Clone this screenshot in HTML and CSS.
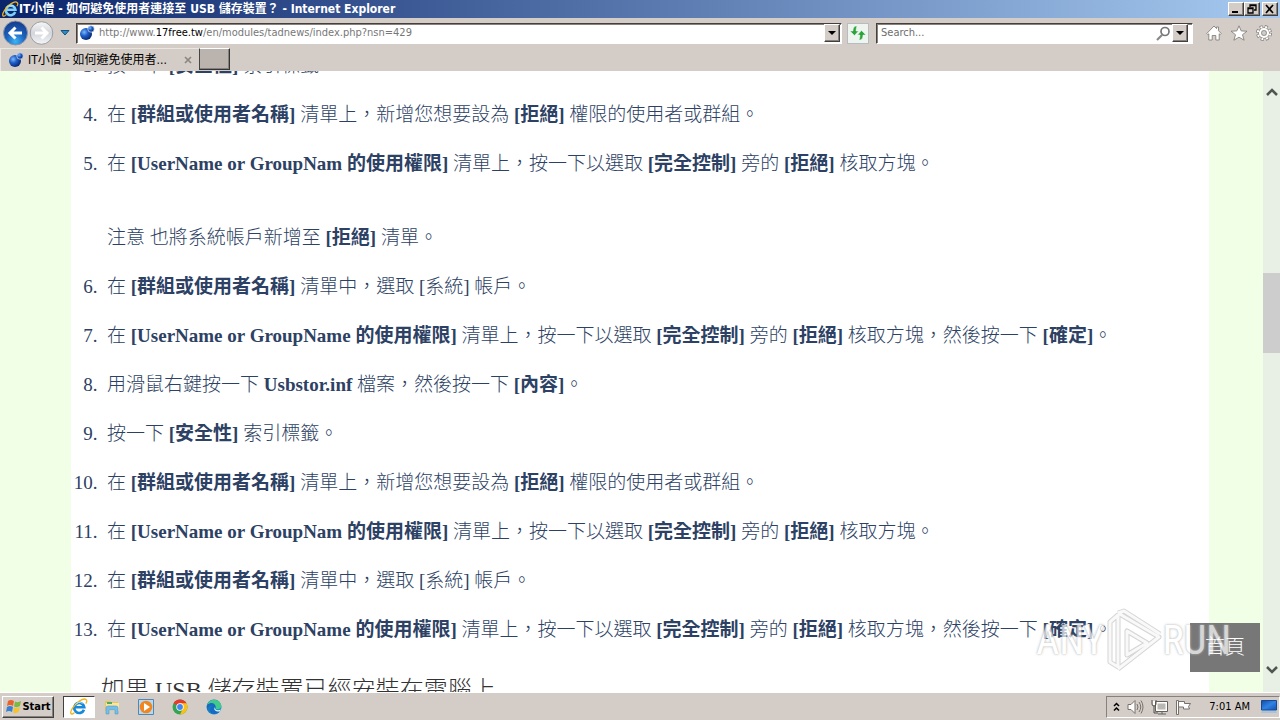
FILE: index.html
```html
<!DOCTYPE html>
<html lang="zh-Hant">
<head>
<meta charset="utf-8">
<title>IT小僧 - 如何避免使用者連接至 USB 儲存裝置？</title>
<link rel="stylesheet" href="styles.css">
</head>
<body>
<svg class="defs" width="0" height="0" aria-hidden="true">
  <defs>
    <radialGradient id="blue" cx="50%" cy="85%" r="80%"><stop offset="0" stop-color="#3fb4f4"/><stop offset=".5" stop-color="#1b62bd"/><stop offset="1" stop-color="#173f8d"/></radialGradient>
    <radialGradient id="ball" cx="35%" cy="35%" r="70%"><stop offset="0" stop-color="#7eb8f8"/><stop offset=".45" stop-color="#1e5fc8"/><stop offset="1" stop-color="#08256e"/></radialGradient>
    <linearGradient id="silver" x2="0" y2="1"><stop offset="0" stop-color="#f7f7f7"/><stop offset=".5" stop-color="#d2d5da"/><stop offset="1" stop-color="#f4f6f8"/></linearGradient>
    <linearGradient id="screen" x2="1" y2="1"><stop offset="0" stop-color="#164aa8"/><stop offset=".5" stop-color="#2f83e4"/><stop offset="1" stop-color="#1550b4"/></linearGradient>
    <linearGradient id="edge" x2="1" y2="1"><stop offset="0" stop-color="#1168b8"/><stop offset="1" stop-color="#1c9ad8"/></linearGradient>
  </defs>
  <symbol id="ie" viewBox="0 0 20 20">
    <path d="M15.500 13A5.600 5.600 0 1 1 15.800 10.300H6" fill="none" stroke="currentColor" stroke-width="3"/>
    <path d="M5 16C1 20-1 17 3 11 7 5 15-1 18 2c1 1 .5 3-.5 4" fill="none" stroke="#f1b51c" stroke-width="1.500"/>
    <path d="M6 7.500A5.600 5.600 0 0 1 14 6" fill="none" stroke="#b5e6ff" stroke-width="1"/>
  </symbol>
  <symbol id="globe" viewBox="0 0 16 16">
    <circle cx="7" cy="9" r="6" fill="url(#ball)"/><circle cx="12" cy="4" r="3.200" fill="url(#ball)" stroke="#dfeaff" stroke-width=".7"/>
  </symbol>
</svg>

<header class="titlebar">
  <svg class="title-icon" aria-hidden="true"><use href="#ie"/></svg>
  <h1 class="title">IT小僧 - 如何避免使用者連接至 USB 儲存裝置？ - Internet Explorer</h1>
  <div class="window-buttons">
    <button class="bevel win" aria-label="Minimize"><svg width="12" height="10"><path d="M2 8h6" stroke="#000" stroke-width="2"/></svg></button>
    <button class="bevel win" aria-label="Restore"><svg width="12" height="10"><path d="M4 3V1h6v5H8M4 1.500h6M2 4h5v5H2zM2 4.500h5" fill="none" stroke="#000" stroke-width="1.300"/></svg></button>
    <button class="bevel win close" aria-label="Close"><svg width="12" height="10"><path d="M2 1l7 8M9 1L2 9" stroke="#000" stroke-width="1.700"/></svg></button>
  </div>
</header>

<nav class="navbar" aria-label="Browser">
  <button class="plain" aria-label="Back"><svg width="27" height="26" viewBox="0 0 27 26"><circle cx="13.500" cy="13" r="12" fill="url(#blue)" stroke="#8b96ad"/><path d="M20 13H8M13.500 7.500L8 13l5.500 5.500" fill="none" stroke="#fff" stroke-width="3"/></svg></button>
  <button class="plain" aria-label="Forward"><svg width="25" height="26" viewBox="0 0 25 26"><circle cx="12.500" cy="13" r="11.300" fill="url(#silver)" stroke="#9a9da3"/><path d="M6 13h12M12.500 7.500L18 13l-5.500 5.500" fill="none" stroke="#fff" stroke-width="3"/></svg></button>
  <button class="plain recent" aria-label="Recent pages"><svg width="10" height="6"><path d="M1 .5h8L5 5z" fill="#2a8fc6" stroke="#17507c"/></svg></button>
  <form class="field address">
    <svg class="site-icon" aria-hidden="true"><use href="#globe"/></svg>
    <div class="url" role="textbox" aria-label="Address" contenteditable="true" spellcheck="false">http://www.<span class="domain">17free.tw</span>/en/modules/tadnews/index.php?nsn=429</div>
    <button type="button" class="bevel drop" aria-label="Show addresses"><svg width="8" height="5"><path d="M0 0h8L4 4z"/></svg></button>
  </form>
  <button class="refresh" aria-label="Refresh"><svg width="16" height="14" viewBox="0 0 16 14"><path d="M7 0C4 0 3 2 3 5H0l4.500 4.500L8.500 5H6c0-2 .3-3 1-5zM9 14c3 0 4-2 4-5h3l-4.500-4.500L7.500 9H10c0 2-.3 3-1 5z" fill="#2ba33b" stroke="#e9fbe9" stroke-width=".5"/></svg></button>
  <form class="field search">
    <input class="search-input" type="text" placeholder="Search..." aria-label="Search">
    <button type="button" class="plain" aria-label="Go"><svg width="15" height="15"><circle cx="9" cy="5.500" r="4" fill="none" stroke="#777" stroke-width="1.700"/><path d="M6 9l-5 5" stroke="#888" stroke-width="2.200"/></svg></button>
    <button type="button" class="bevel drop" aria-label="Search options"><svg width="8" height="5"><path d="M0 0h8L4 4z"/></svg></button>
  </form>
  <div class="tools">
    <button class="plain" aria-label="Home"><svg width="16" height="16" viewBox="0 0 16 16"><path d="M.8 8.500L8 1l2.500 2.600V2h2v3.700l2.700 2.800-1 1.200-1-.9V15H9.800v-4.500H6.200V15H2.800V8.800l-1 .9z" fill="#fff" stroke="#85817c" stroke-width=".9"/></svg></button>
    <button class="plain" aria-label="Favorites"><svg width="18" height="16" viewBox="0 0 18 16"><path d="M9 .8l2.200 5.100 5.800.3-4.500 3.500 1.600 5.500L9 12.200l-5.100 3 1.600-5.500L1 6.200l5.800-.3z" fill="#fff" stroke="#85817c" stroke-width=".9"/></svg></button>
    <button class="plain" aria-label="Tools"><svg width="16" height="16" viewBox="0 0 16 16"><circle cx="8" cy="8" r="6.300" fill="none" stroke="#85817c" stroke-width="3.400" stroke-dasharray="2.900 2.048"/><circle cx="8" cy="8" r="4.400" fill="#fff" stroke="#85817c" stroke-width="2.800"/><circle cx="8" cy="8" r="6.200" fill="none" stroke="#fff" stroke-width="2" stroke-dasharray="1.900 2.970" stroke-dashoffset="-.5"/><circle cx="8" cy="8" r="4" fill="none" stroke="#fff" stroke-width="2.200"/><circle cx="8" cy="8" r="2.500" fill="#d4cdc7" stroke="#85817c" stroke-width=".8"/></svg></button>
  </div>
</nav>

<div class="tabs">
  <div class="tab">
    <svg class="site-icon" aria-hidden="true"><use href="#globe"/></svg>
    <span class="tab-name">IT小僧 - 如何避免使用者...</span>
    <button class="plain" aria-label="Close tab"><svg width="8" height="8"><path d="M1 1l6 6M7 1L1 7" stroke="#8c8681" stroke-width="1.700"/></svg></button>
  </div>
  <button class="bevel new-tab" aria-label="New tab"></button>
</div>

<div class="viewport">
  <main class="page">
    <article class="article">
      <ol class="steps" start="3">
        <li>按一下 <strong>[安全性]</strong> 索引標籤</li>
        <li>在 <strong>[群組或使用者名稱]</strong> 清單上，新增您想要設為 <strong>[拒絕]</strong> 權限的使用者或群組。</li>
        <li>在 <strong>[UserName or GroupNam 的使用權限]</strong> 清單上，按一下以選取 <strong>[完全控制]</strong> 旁的 <strong>[拒絕]</strong> 核取方塊。
          <p class="note">注意 也將系統帳戶新增至 <strong>[拒絕]</strong> 清單。</p></li>
        <li>在 <strong>[群組或使用者名稱]</strong> 清單中，選取 [系統] 帳戶。</li>
        <li>在 <strong>[UserName or GroupName 的使用權限]</strong> 清單上，按一下以選取 <strong>[完全控制]</strong> 旁的 <strong>[拒絕]</strong> 核取方塊，然後按一下 <strong>[確定]</strong>。</li>
        <li>用滑鼠右鍵按一下 <strong>Usbstor.inf</strong> 檔案，然後按一下 <strong>[內容]</strong>。</li>
        <li>按一下 <strong>[安全性]</strong> 索引標籤。</li>
        <li>在 <strong>[群組或使用者名稱]</strong> 清單上，新增您想要設為 <strong>[拒絕]</strong> 權限的使用者或群組。</li>
        <li>在 <strong>[UserName or GroupNam 的使用權限]</strong> 清單上，按一下以選取 <strong>[完全控制]</strong> 旁的 <strong>[拒絕]</strong> 核取方塊。</li>
        <li>在 <strong>[群組或使用者名稱]</strong> 清單中，選取 [系統] 帳戶。</li>
        <li>在 <strong>[UserName or GroupName 的使用權限]</strong> 清單上，按一下以選取 <strong>[完全控制]</strong> 旁的 <strong>[拒絕]</strong> 核取方塊，然後按一下 <strong>[確定]</strong>。</li>
      </ol>
      <h2 class="section">如果 USB 儲存裝置已經安裝在電腦上</h2>
    </article>
    <a class="home-link" href="#">首頁</a>
    <div class="watermark" aria-hidden="true">
      <span>ANY</span>
      <svg width="58" height="66" viewBox="0 0 58 66"><g fill="none" stroke-linejoin="round"><path d="M5 14v40l8 5V7zM13 5l41 24-41 32M13 5l6-2 36 23M22 23v24l20-12z" stroke="#c4c4c4" stroke-width="5"/><path d="M5 14v40l8 5V7zM13 5l41 24-41 32M13 5l6-2 36 23M22 23v24l20-12z" stroke="#f7f7f7" stroke-width="3"/></g></svg>
      <span>RUN</span>
    </div>
  </main>
  <div class="scrollbar" aria-hidden="true">
    <svg width="12" height="8"><path d="M1 7l5-5 5 5" fill="none" stroke="#505550" stroke-width="2.500"/></svg>
    <div class="track"><div class="thumb"></div></div>
    <svg width="12" height="8"><path d="M1 1l5 5 5-5" fill="none" stroke="#505550" stroke-width="2.500"/></svg>
  </div>
</div>

<footer class="taskbar">
  <button class="bevel start"><svg width="17" height="16" viewBox="0 0 17 16"><path d="M3 2q3-2 6 0L8 7Q5 5 2 7z" fill="#e8622c"/><path d="M10 2.500q3 1.500 6-.5l-1 5q-3 2-6 .5z" fill="#7db843"/><path d="M2 8q3-2 6 0l-1 5q-3-2-6 0z" fill="#3a80d0"/><path d="M9 8.500q3 1.500 6-.5l-1.500 5q-3 2-5.500.5z" fill="#f5c330"/></svg>Start</button>
  <div class="apps">
    <button class="app active" aria-label="Internet Explorer"><svg class="ie-icon" width="18" height="18"><use href="#ie"/></svg></button>
    <button class="app" aria-label="Explorer"><svg width="16" height="16" viewBox="0 0 16 16"><path d="M1 2h5l1 1h7v9H1z" fill="#e9c65c"/><path d="M2 4h13v8H2z" fill="#f9e7a0"/><path d="M3 3h5v2H3z" fill="#53a95e"/><path d="M2 15V9q0-2 2-2h8q2 0 2 2v6h-3v-4H5v4z" fill="#78bde5" stroke="#4e9ac8" stroke-width=".6"/></svg></button>
    <button class="app" aria-label="Media Player"><svg width="16" height="16" viewBox="0 0 16 16"><path d="M.5.5h15v15H.5z" fill="#b9d7ed" stroke="#4c89b9"/><circle cx="8" cy="8" r="6.300" fill="#f18620"/><path d="M6 4l6 4-6 4z" fill="#fff"/></svg></button>
    <button class="app" aria-label="Chrome"><svg width="16" height="16" viewBox="0 0 16 16"><circle cx="8" cy="8" r="7.500" fill="#34a353"/><path d="M8 8L1.500 4.300A7.500 7.500 0 0 1 14.500 4.300z" fill="#e33b2e"/><path d="M8 8V4.300h6.500A7.500 7.500 0 0 1 8 15.500l3-6z" fill="#fbc116"/><circle cx="8" cy="8" r="3.700" fill="#fff"/><circle cx="8" cy="8" r="2.900" fill="#4285f4"/></svg></button>
    <button class="app" aria-label="Edge"><svg width="16" height="16" viewBox="0 0 16 16"><circle cx="8" cy="8" r="7.500" fill="url(#edge)"/><path d="M1 6C3-1 14-1 15.500 7c0 3-4 4-6 2.500C11 7 7 3 1 6z" fill="#42c98c"/><path d="M1 6c5-4 9-1 8.500 2.500-3 0-2 4 4 4-4 5-12 1.500-9-3.500 1-2 2-2 2-2C4 6 2 8 1 10z" fill="#176abf"/><path d="M9 8c-1 3 3 4 6 2.500l-1.300 2C10 13 7 11 9 8z" fill="#d9eef4"/></svg></button>
  </div>
  <div class="tray">
    <svg width="7" height="10"><path d="M1 4l2.500-2.500L6 4M1 8.500L3.500 6 6 8.500" fill="none" stroke="#000" stroke-width="1.500"/></svg>
    <svg width="17" height="16" viewBox="0 0 17 16"><path d="M1 5.500h3l4-4v13l-4-4H1z" fill="#fff" stroke="#77716c"/><path d="M10 5q2 3 0 6M12 3q3.500 5 0 10M14 1.500q4 6.500 0 13" fill="none" stroke="#77716c"/></svg>
    <svg width="17" height="16" viewBox="0 0 17 16"><path d="M5.500 3.500h10v8h-10z" fill="#bbb7b2" stroke="#fff" stroke-width="2"/><path d="M4.500 2.500h12v10h-12zM7 15h8M11 12v3" fill="none" stroke="#65605c"/><path d="M1 1v4q0 2 2 2t2-2V1M3 7v7h4" fill="none" stroke="#55504c"/><path d="M2 2h2v4H2z" fill="#fff"/></svg>
    <svg width="18" height="16" viewBox="0 0 18 16"><path d="M1.500 1.500h2v14h-2zM3.500 2.500h6v2h6l-2 3 1 2.500h-6V8h-5z" fill="#fff" stroke="#77716c"/></svg>
    <time class="clock">7:01 AM</time>
    <svg width="16" height="13" viewBox="0 0 16 13"><path d="M.5.5h15v9.500H.5z" fill="url(#screen)" stroke="#174a91"/><path d="M1 11h14l1 2H0z" fill="#a5c3e2"/></svg>
  </div>
</footer>
</body>
</html>
```

FILE: styles.css
```css
* { box-sizing: border-box; }

body {
  margin: 0;
  height: 100vh;
  display: flex;
  flex-direction: column;
  overflow: hidden;
  background: #d4cdc7;
  color: #000;
  font: 11px/14px "DejaVu Sans Condensed", "Noto Sans CJK TC", sans-serif;
}

button, input { font: inherit; color: inherit; }
button { padding: 0; display: flex; align-items: center; justify-content: center; }
svg { flex: none; display: block; }
.defs { position: absolute; }
.plain { border: 0; background: none; }

.bevel {
  background: #d4cdc7;
  border: 1px solid;
  border-color: #fff #404040 #404040 #fff;
  box-shadow: inset -1px -1px #86817c;
}

/* Title bar */
.titlebar {
  display: flex;
  align-items: center;
  height: 18px;
  padding: 0 2px;
  background: linear-gradient(90deg, #0a246a, #a6caf0);
  color: #fff;
}
.title-icon { width: 17px; height: 17px; color: #7fd0f8; }
.ie-icon { color: #1689d8; }
.title {
  flex: 1;
  min-width: 0;
  margin: 0;
  font-size: 12px;
  font-weight: bold;
  line-height: 18px;
  white-space: nowrap;
  overflow: hidden;
}
.window-buttons { display: flex; }
.win { width: 16px; height: 14px; }
.close { margin-left: 2px; }

/* Navigation */
.navbar {
  display: flex;
  align-items: center;
  height: 30px;
  padding: 0 8px 0 2px;
}
.recent { width: 22px; height: 20px; }
.field {
  display: flex;
  align-items: center;
  height: 21px;
  background: #fff;
  border: 1px solid;
  border-color: #45403c #fff #fff #45403c;
  box-shadow: inset 1px 1px #86817c;
}
.address { flex: 761; min-width: 0; padding: 0 1px 0 2px; }
.search { flex: 307; min-width: 0; padding: 0 4px; }
.site-icon { width: 16px; height: 16px; }
.url { flex: 1; min-width: 0; padding-left: 4px; color: #777; white-space: nowrap; overflow: hidden; }
.domain { color: #000; }
.drop { width: 16px; height: 18px; }
.refresh {
  width: 22px;
  height: 21px;
  margin: 0 7px 0 5px;
  background: #eef4f0;
  border: 1px solid #b7bcc0;
}
.search-input { flex: 1; min-width: 0; padding: 0; border: 0; background: none; }
.search-input::placeholder { color: #6d6d6d; opacity: 1; }
.search .drop { margin-left: 1px; }
.tools { display: flex; gap: 8px; margin-left: 13px; }

/* Tabs */
.tabs { display: flex; height: 23px; }
.tab {
  display: flex;
  align-items: center;
  width: 199px;
  padding: 0 7px;
  border-top: 1px solid #eae6e2;
  border-left: 1px solid #eae6e2;
}
.tab-name { flex: 1; padding-left: 4px; font-size: 12px; white-space: nowrap; }
.new-tab { width: 31px; height: 22px; background: #bbb3ad; border-color: #fff #333 #333; border-left-color: #444; }

/* Web page */
.viewport { flex: 1; min-height: 0; display: flex; }
.page {
  position: relative;
  flex: 1;
  min-width: 0;
  overflow: hidden;
  padding: 0 54px 0 71px;
  background: #f0ffe6;
  font-family: "Liberation Serif", "Noto Sans CJK TC", serif;
  color: #2c4163;
}
.article { height: 100%; overflow: hidden; background: #fff; font-weight: 300; }
.article strong { font-weight: 700; }
.steps {
  display: flex;
  flex-direction: column;
  gap: 22px;
  margin: -19px 0 0;
  padding: 0 0 0 36px;
  font-size: 19px;
  line-height: 27px;
}
.steps li::marker { content: counter(list-item) ".\a0\a0"; }
.note { margin: 47px 0 0; }
.section {
  margin: 30px 0 0 30px;
  font-size: 24px;
  font-weight: 300;
  line-height: 34px;
  color: #333;
}

.home-link {
  position: absolute;
  right: 3px;
  bottom: 20px;
  padding: 10px 15px;
  background: #777;
  color: #fff;
  font-size: 20px;
  font-weight: 300;
  line-height: 29px;
  text-decoration: none;
}
.watermark {
  position: absolute;
  right: 32px;
  bottom: 18px;
  display: flex;
  align-items: center;
  color: #fff;
  font: 40px/48px "Roboto Condensed", "Liberation Sans Narrow", "Liberation Sans", sans-serif;
  text-shadow: 0 0 2px #aaa, 0 0 3px #bbb;
  opacity: .7;
  pointer-events: none;
}

/* Scroll bar */
.scrollbar {
  display: flex;
  flex-direction: column;
  align-items: center;
  gap: 8px;
  width: 17px;
  padding: 17px 0 18px;
  background: #e8f0e5;
}
.track { flex: 1; align-self: stretch; padding-top: 169px; }
.thumb { height: 80px; background: #cdcdcd; }

/* Task bar */
.taskbar {
  display: flex;
  align-items: center;
  height: 28px;
  padding: 0 0 0 2px;
  border-top: 1px solid #fff;
}
.start { width: 52px; height: 22px; font-weight: bold; }
.apps { display: flex; margin-left: 9px; }
.app { width: 34px; height: 22px; border: 0; background: none; }
.active {
  width: 32px;
  background: #fff;
  border: 1px solid;
  border-color: #404040 #fff #fff #404040;
}
.tray {
  display: flex;
  align-items: center;
  gap: 7px;
  height: 22px;
  margin-left: auto;
  padding: 0 2px 0 6px;
  border: 1px solid;
  border-color: #86817c #fff #fff #86817c;
}
.clock { margin: 0 4px 0 9px; white-space: nowrap; }
```
